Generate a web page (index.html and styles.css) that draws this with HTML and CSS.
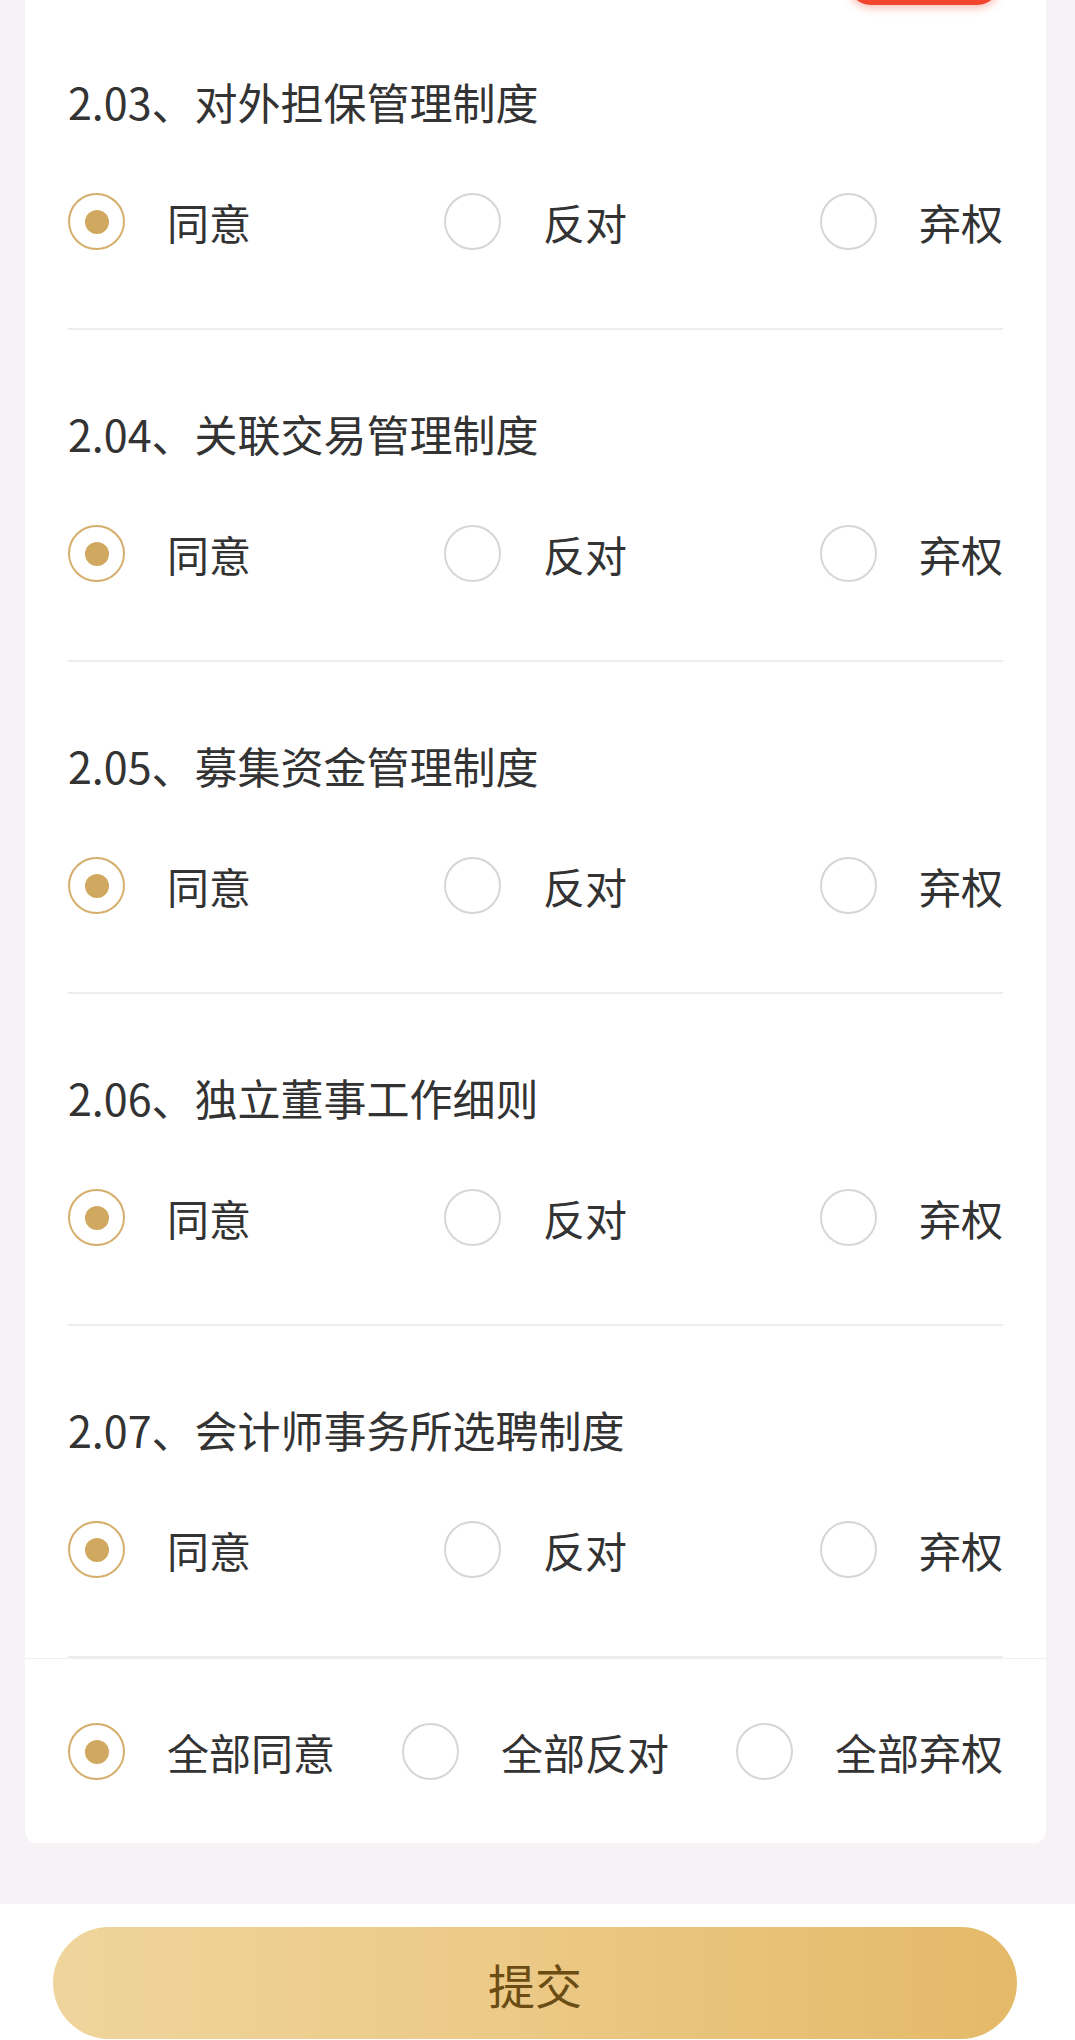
FILE: index.html
```html
<!DOCTYPE html>
<html lang="zh-CN">
<head>
    <meta charset="UTF-8">
    <meta name="viewport" content="width=device-width, initial-scale=1.0">
    <title>议案表决</title>
    <link rel="stylesheet" href="styles.css">
</head>
<body>
    <div class="page">
        <div class="card">
            <div class="card-head">
                <span class="badge"></span>
            </div>

            <div class="item">
                <div class="item-title">2.03、对外担保管理制度</div>
                <div class="options">
                    <label class="option checked"><span class="radio"></span><span>同意</span></label>
                    <label class="option"><span class="radio"></span><span>反对</span></label>
                    <label class="option"><span class="radio"></span><span>弃权</span></label>
                </div>
            </div>

            <div class="item">
                <div class="item-title">2.04、关联交易管理制度</div>
                <div class="options">
                    <label class="option checked"><span class="radio"></span><span>同意</span></label>
                    <label class="option"><span class="radio"></span><span>反对</span></label>
                    <label class="option"><span class="radio"></span><span>弃权</span></label>
                </div>
            </div>

            <div class="item">
                <div class="item-title">2.05、募集资金管理制度</div>
                <div class="options">
                    <label class="option checked"><span class="radio"></span><span>同意</span></label>
                    <label class="option"><span class="radio"></span><span>反对</span></label>
                    <label class="option"><span class="radio"></span><span>弃权</span></label>
                </div>
            </div>

            <div class="item">
                <div class="item-title">2.06、独立董事工作细则</div>
                <div class="options">
                    <label class="option checked"><span class="radio"></span><span>同意</span></label>
                    <label class="option"><span class="radio"></span><span>反对</span></label>
                    <label class="option"><span class="radio"></span><span>弃权</span></label>
                </div>
            </div>

            <div class="item">
                <div class="item-title">2.07、会计师事务所选聘制度</div>
                <div class="options">
                    <label class="option checked"><span class="radio"></span><span>同意</span></label>
                    <label class="option"><span class="radio"></span><span>反对</span></label>
                    <label class="option"><span class="radio"></span><span>弃权</span></label>
                </div>
            </div>

            <!-- 一键全选 -->
            <div class="all-row">
                <div class="options">
                    <label class="option checked"><span class="radio"></span><span>全部同意</span></label>
                    <label class="option"><span class="radio"></span><span>全部反对</span></label>
                    <label class="option"><span class="radio"></span><span>全部弃权</span></label>
                </div>
            </div>
        </div>
    </div>

    <div class="footer">
        <button class="submit">提交</button>
    </div>
</body>
</html>
```

FILE: styles.css
```css
body {
    margin: 0;
    font-family: "Noto Sans CJK SC", "Noto Sans", sans-serif;
    color: #333;
    background: #fff;
    overflow: hidden;
}

.page {
    background: #f6f2f5;
    padding: 0 29px 61px 25px;
}

.card {
    background: #fff;
    border-radius: 0 0 12px 12px;
    margin-top: -41px;
}

.card-head {
    height: 45px;
    margin-bottom: -6px;
    display: flex;
    justify-content: flex-end;
    padding-right: 46px;
}

.badge {
    width: 152px;
    height: 46px;
    border-radius: 23px;
    background: #f2452e;
    box-shadow: 0 3px 8px rgba(242, 69, 46, 0.35);
}

.item {
    margin: 0 43px;
    padding: 73px 0 78px;
    border-bottom: 2px solid #ededed;
}

.item-title {
    font-size: 43px;
    line-height: 60px;
    color: #333;
}

.options {
    display: flex;
    justify-content: space-between;
    align-items: center;
    height: 57px;
}

.item .options {
    margin-top: 62px;
}

.option {
    display: flex;
    align-items: center;
    gap: 42px;
    font-size: 42px;
    line-height: 57px;
    color: #333;
}

.radio {
    box-sizing: border-box;
    width: 57px;
    height: 57px;
    border-radius: 50%;
    border: 2px solid #d6d6d6;
    display: flex;
    align-items: center;
    justify-content: center;
}

.option.checked .radio {
    border-color: #d5ae6c;
}

.option.checked .radio::after {
    content: "";
    width: 24px;
    height: 24px;
    border-radius: 50%;
    background: #d1a860;
}

.all-row {
    border-top: 1px solid #efefef;
    padding: 64px 43px 63px;
}

.footer {
    background: #fff;
    padding: 23px 58px 0 53px;
}

.submit {
    display: block;
    width: 100%;
    height: 112px;
    border: none;
    border-radius: 56px;
    background: linear-gradient(90deg, #efd59c 0%, #ecca88 45%, #e9c279 70%, #e4ba69 100%);
    color: #6b4c14;
    font-family: "Noto Sans CJK SC", sans-serif;
    font-size: 47px;
    cursor: pointer;
}
```
